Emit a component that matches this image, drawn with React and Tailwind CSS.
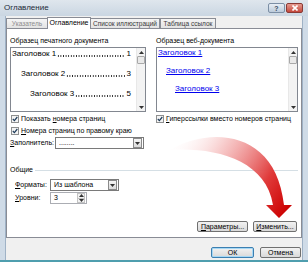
import React from "react";

function Check() {
  return (
    <span className="w-[8px] h-[8px] border border-[#8e8f8f] bg-[#f4f4f4] flex items-center justify-center shrink-0">
      <svg width="6" height="6" viewBox="0 0 6 6">
        <path d="M0.8 3 L2.4 4.6 L5.3 1" fill="none" stroke="#1d3b5a" strokeWidth="1.2" />
      </svg>
    </span>
  );
}

function Tri({ up }) {
  return (
    <svg width="5" height="3" viewBox="0 0 5 3">
      <path d={up ? "M0 3 L2.5 0 L5 3 Z" : "M0 0 L5 0 L2.5 3 Z"} fill="#333" />
    </svg>
  );
}

function Scroll() {
  return (
    <div className="w-[9px] shrink-0 bg-[#f3f3f3] border-l border-[#e8e8e8] flex flex-col items-center">
      <div className="h-[8px] flex items-center">
        <Tri up />
      </div>
      <div className="w-[8px] h-[8px] bg-[#e9e9e9] border border-[#a9a9a9] rounded-[1px]" />
      <div className="flex-1" />
      <div className="h-[8px] flex items-center">
        <Tri />
      </div>
    </div>
  );
}

function Combo({ w, text }) {
  return (
    <div className={`${w} h-[12px] border border-[#7a7a7a] bg-white flex items-center`}>
      <span className="flex-1 pl-[3px] leading-[10px]">{text}</span>
      <span className="w-[9px] h-[10px] mr-[1px] border border-[#8a8a8a] bg-gradient-to-b from-[#f6f6f6] to-[#dcdcdc] flex items-center justify-center">
        <Tri />
      </span>
    </div>
  );
}

function Btn({ w, children, def }) {
  return (
    <div
      className={`${w} h-[11px] rounded-[2px] border ${
        def ? "border-[#3c7fb1] shadow-[inset_0_0_0_1px_#a6d8f5]" : "border-[#707070]"
      } bg-gradient-to-b from-[#f2f2f2] to-[#d9d9d9] flex items-center justify-center leading-[9px]`}
    >
      {children}
    </div>
  );
}

function PrintLine({ pl, title, num }) {
  return (
    <div className={`flex min-w-0 leading-[10px] ${pl}`}>
      <span className="shrink-0">{title}</span>
      <span className="flex-1 min-w-0 self-end mb-[2px] mx-[1px] h-[2px] bg-[radial-gradient(circle,#222_0.6px,transparent_0.9px)] bg-[length:2.6px_2px] bg-repeat-x" />
      <span className="shrink-0 pl-[1px]">{num}</span>
    </div>
  );
}

export default function App() {
  const tabs = [
    { t: "Указатель", w: "w-[42px]", dim: true },
    { t: "Оглавление", w: "w-[44px]", active: true },
    { t: "Список иллюстраций", w: "w-[70px]" },
    { t: "Таблица ссылок", w: "w-[56px]" },
  ];

  return (
    <div className="w-[308px] h-[262px] relative overflow-hidden bg-[#cfdbe7] text-[7px] text-black font-['Liberation_Sans',Arial,sans-serif]">
      <div className="h-[16px] flex items-center pl-[4px] pr-[5px] bg-gradient-to-b from-[#dfe6ed] to-[#cad6e2]">
        <span className="text-[8px] text-[#1c2a38]">Оглавление</span>
        <div className="ml-auto flex gap-[1px]">
          <div className="w-[17px] h-[10px] rounded-[2px] border border-[#7c8fa5] bg-gradient-to-b from-[#e7eef5] to-[#bccbdb] flex items-center justify-center text-[7px] font-bold text-[#3a4c60] leading-none">
            ?
          </div>
          <div className="w-[17px] h-[10px] rounded-[2px] border border-[#8a3a35] bg-gradient-to-b from-[#e59a90] to-[#c4463c] flex items-center justify-center">
            <svg width="6" height="6" viewBox="0 0 6 6">
              <path d="M0.5 0.5 L5.5 5.5 M5.5 0.5 L0.5 5.5" stroke="#fff" strokeWidth="1.6" />
            </svg>
          </div>
        </div>
      </div>

      <div className="mx-[5px] h-[244px] bg-[#f0f0f0] border-x border-[#9fb2c6] pt-[1px]">
        <div className="flex items-end h-[11px] relative z-10">
          {tabs.map((tab) =>
            tab.active ? (
              <div
                key={tab.t}
                className={`${tab.w} h-[12px] -mb-px -mx-px bg-white border border-b-0 border-[#898c95] flex items-center justify-center whitespace-nowrap`}
              >
                {tab.t}
              </div>
            ) : (
              <div
                key={tab.t}
                className={`${tab.w} h-[10px] border border-b-0 border-[#898c95] bg-gradient-to-b from-[#f5f5f5] to-[#e3e3e3] flex items-center justify-center whitespace-nowrap text-[6.5px] ${
                  tab.dim ? "text-[#8d8d8d]" : "text-[#3a3a3a]"
                }`}
              >
                {tab.t}
              </div>
            )
          )}
        </div>

        <div className="h-[210px] bg-white border border-[#898c95] pt-[7px] px-[3px]">
          <div className="flex gap-[10px]">
            <div className="w-[136px] shrink-0">
              <div className="h-[9px] leading-[9px]">Образец печатного документа</div>
              <div className="mt-[2px] h-[65px] border border-[#828790] flex">
                <div className="flex-1 min-w-0 overflow-hidden flex flex-col gap-[10px] pt-[1px] pr-[5px] text-[8px]">
                  <PrintLine pl="pl-[1px]" title="Заголовок 1 " num="1" />
                  <PrintLine pl="pl-[10px]" title="Заголовок 2" num="3" />
                  <PrintLine pl="pl-[19px]" title="Заголовок 3" num="5" />
                </div>
                <Scroll />
              </div>
              <div className="mt-[2px] h-[10px] flex items-center gap-[2px] pl-[1px]">
                <Check />
                <span>
                  Показать <span className="underline">н</span>омера страниц
                </span>
              </div>
              <div className="mt-[2px] h-[10px] flex items-center gap-[2px] pl-[1px]">
                <Check />
                <span>
                  <span className="underline">Н</span>омера страниц по правому краю
                </span>
              </div>
              <div className="mt-[1px] flex items-center">
                <span className="w-[45px]">
                  <span className="underline">З</span>аполнитель:
                </span>
                <Combo w="w-[89px]" text="........" />
              </div>
            </div>

            <div className="w-[142px] shrink-0">
              <div className="h-[9px] leading-[9px]">Образец веб-документа</div>
              <div className="mt-[2px] h-[65px] border border-[#828790] flex">
                <div className="flex-1 min-w-0 flex flex-col items-start gap-[8px] text-[8px] leading-[10px] text-[#0000ee]">
                  <span className="ml-[1px] underline">Заголовок 1</span>
                  <span className="ml-[9px] underline">Заголовок 2</span>
                  <span className="ml-[18px] underline">Заголовок 3</span>
                </div>
                <Scroll />
              </div>
              <div className="mt-[2px] h-[10px] flex items-center gap-[2px]">
                <Check />
                <span>
                  <span className="underline">Г</span>иперссылки вместо номеров страниц
                </span>
              </div>
            </div>
          </div>

          <div className="mt-[17px] h-[9px] flex items-center">
            <span>Общие</span>
            <div className="flex-1 ml-[2px] h-px bg-[#d5dfe5]" />
          </div>
          <div className="mt-[4px] pl-[5px] flex items-center">
            <span className="w-[35px]">
              <span className="underline">Ф</span>орматы:
            </span>
            <Combo w="w-[69px]" text="Из шаблона" />
          </div>
          <div className="mt-[1px] pl-[5px] flex items-center">
            <span className="w-[35px]">
              <span className="underline">У</span>ровни:
            </span>
            <div className="w-[37px] h-[12px] border border-[#abadb3] bg-white flex items-center">
              <span className="flex-1 pl-[3px]">3</span>
              <div className="w-[8px] h-[10px] mr-[1px] flex flex-col">
                <div className="flex-1 border border-[#c3c3c3] bg-[#f2f2f2] flex items-center justify-center">
                  <Tri up />
                </div>
                <div className="flex-1 border border-t-0 border-[#c3c3c3] bg-[#f2f2f2] flex items-center justify-center">
                  <Tri />
                </div>
              </div>
            </div>
          </div>

          <div className="mt-[17px] mr-[1px] flex justify-end gap-[5px]">
            <Btn w="w-[51px]">
              <span>
                <span className="underline">П</span>араметры...
              </span>
            </Btn>
            <Btn w="w-[44px]">
              <span>
                <span className="underline">И</span>зменить...
              </span>
            </Btn>
          </div>
        </div>

        <div className="mt-[9px] mr-[1px] flex justify-end gap-[6px]">
          <Btn w="w-[43px]" def>
            ОК
          </Btn>
          <Btn w="w-[41px]">Отмена</Btn>
        </div>
      </div>
      <div className="h-[2px] bg-[#4f9eae]" />

      <svg className="absolute left-0 top-0 pointer-events-none" width="308" height="262" viewBox="0 0 308 262">
        <defs>
          <linearGradient id="arr" x1="170" y1="140" x2="285" y2="215" gradientUnits="userSpaceOnUse">
            <stop offset="0" stopColor="#ffffff" stopOpacity="0" />
            <stop offset="0.35" stopColor="#f4b4b4" stopOpacity="0.7" />
            <stop offset="0.75" stopColor="#e03a3a" />
            <stop offset="1" stopColor="#cc0000" />
          </linearGradient>
        </defs>
        <path
          d="M170 150 C210 126 276 130 284 205 L292 205 L279 218 L266 205 L273 205 C266 160 215 147 170 150 Z"
          fill="url(#arr)"
        />
      </svg>
    </div>
  );
}
